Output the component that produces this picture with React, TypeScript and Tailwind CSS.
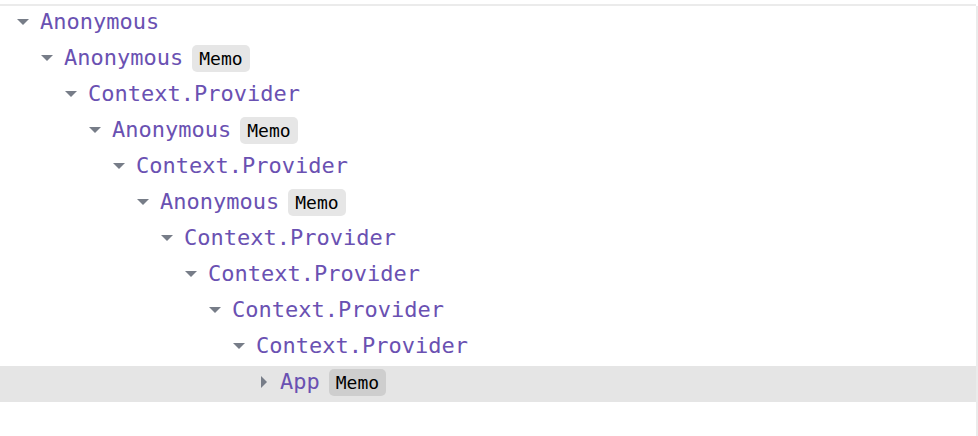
import React from "react";

type Row = { name: string; level: number; memo?: boolean; collapsed?: boolean; selected?: boolean };

const rows: Row[] = [
  { name: "Anonymous", level: 0 },
  { name: "Anonymous", level: 1, memo: true },
  { name: "Context.Provider", level: 2 },
  { name: "Anonymous", level: 3, memo: true },
  { name: "Context.Provider", level: 4 },
  { name: "Anonymous", level: 5, memo: true },
  { name: "Context.Provider", level: 6 },
  { name: "Context.Provider", level: 7 },
  { name: "Context.Provider", level: 8 },
  { name: "Context.Provider", level: 9 },
  { name: "App", level: 10, memo: true, collapsed: true, selected: true },
];

function Toggle({ collapsed }: { collapsed?: boolean }) {
  return (
    <span className="w-[24px] h-[32px] flex items-center shrink-0">
      {collapsed ? (
        <svg width="14" height="14" viewBox="0 0 14 14" className="ml-[4px]">
          <polygon points="1,1 7,7 1,13" fill="#777d88" />
        </svg>
      ) : (
        <svg width="14" height="8" viewBox="0 0 14 8">
          <polygon points="1,1 13,1 7,7" fill="#777d88" />
        </svg>
      )}
    </span>
  );
}

export default function App() {
  return (
    <div className="w-[978px] h-[436px] bg-white pt-[4px] overflow-hidden" style={{ fontFamily: '"DejaVu Sans Mono", monospace' }}>
      <div className="h-[2px] bg-[#ebebeb] w-[976px]" />
      <div className="flex w-[978px]">
        <div className="w-[976px] flex flex-col">
          {rows.map((r, i) => (
            <div
              key={i}
              className={`h-[36px] pb-[4px] flex items-center ${r.selected ? "bg-[#e5e5e5]" : ""}`}
              style={{ paddingLeft: 16 + r.level * 24 }}
            >
              <Toggle collapsed={r.collapsed} />
              <span className="text-[22px] leading-[32px] text-[#6a51b2] whitespace-nowrap">{r.name}</span>
              {r.memo && (
                <span
                  className={`ml-[9px] mt-[1px] h-[27px] px-[7px] rounded-[5px] flex items-center text-[18px] leading-none text-black ${
                    r.selected ? "bg-[#cecece]" : "bg-[#e6e6e6]"
                  }`}
                >
                  Memo
                </span>
              )}
            </div>
          ))}
        </div>
        <div className="w-[2px] bg-[#ebebeb] h-[430px]" />
      </div>
    </div>
  );
}
